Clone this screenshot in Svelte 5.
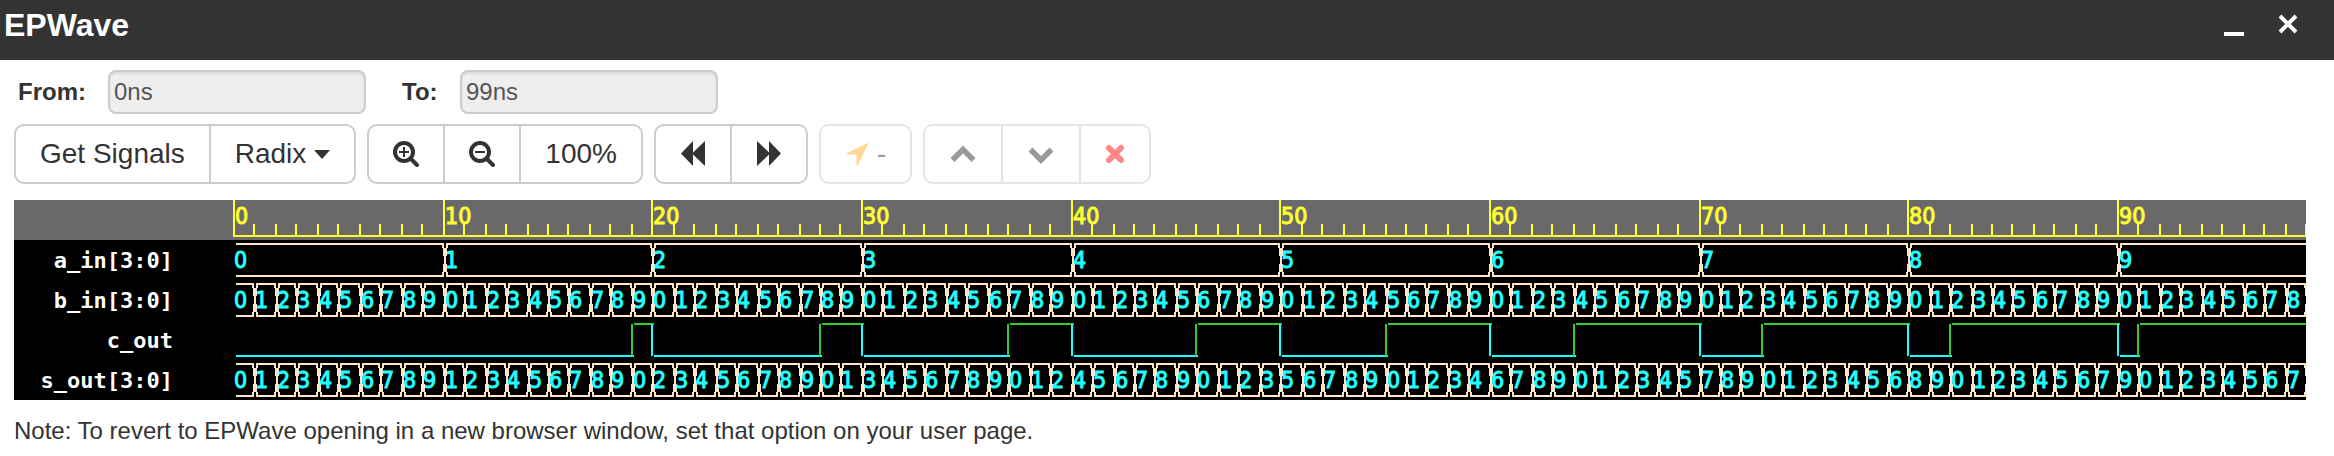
<script>
  const last = 99;
  const times = Array.from({ length: last + 1 }, (_, t) => t);

  let width = $state(2074);

  // Ticks are rounded to a two-pixel grid so that every line stays crisp.
  const xAt = (t) => 2 * Math.round(1 + (t * (width - 2)) / last / 2);

  const names = ['a_in[3:0]', 'b_in[3:0]', 'c_out', 's_out[3:0]'];
  const buses = [
    { top: 44, value: (t) => Math.floor(t / 10) },
    { top: 84, value: (t) => t % 10 },
    { top: 164, value: (t) => (Math.floor(t / 10) + (t % 10)) % 10 }
  ];
  const carry = (t) => Math.floor(t / 10) + (t % 10) >= 10;

  function spans(value) {
    const out = [];
    for (const t of times) {
      const v = value(t);
      const prev = out[out.length - 1];
      if (prev && prev.v === v) prev.end = t + 1;
      else out.push({ v, start: t, end: t + 1 });
    }
    return out;
  }

  function cell(s, top) {
    const mid = top + 16;
    const l = xAt(s.start) + 1;
    const r = xAt(s.end) + 1;
    return [top, top + 32]
      .map((y) => {
        const start = s.start === 0 ? `M${l + 1} ${y}` : `M${l} ${mid}L${l + 2} ${y}H${l + 4}`;
        return `${start}H${r - 2}L${r} ${mid}`;
      })
      .join('');
  }

  const carrySpans = spans(carry);
</script>

<div class="window">
  <header>
    <h1>EPWave</h1>
    <div class="controls">
      <button type="button" aria-label="Minimize">
        <svg width="24" height="24" viewBox="0 0 24 24"><path d="M2 22H22" stroke="#fff" stroke-width="4" /></svg>
      </button>
      <button type="button" aria-label="Close">
        <svg width="24" height="24" viewBox="0 0 24 24"><path d="M4 4L20 20M20 4L4 20" stroke="#fff" stroke-width="4" /></svg>
      </button>
    </div>
  </header>

  <main>
    <form class="range">
      <label for="from">From:</label>
      <input id="from" type="text" value="0ns" readonly />
      <label for="to">To:</label>
      <input id="to" type="text" value="99ns" readonly />
    </form>

    <div class="toolbar">
      <div class="group">
        <button type="button">Get Signals</button>
        <button type="button">Radix <span class="caret"></span></button>
      </div>
      <div class="group">
        <button type="button" aria-label="Zoom in">
          <svg width="26" height="26" viewBox="0 0 26 26">
            <circle cx="11" cy="11" r="9" fill="none" stroke="#333" stroke-width="4" />
            <path d="M17.5 17.5L24 24" stroke="#333" stroke-width="4" stroke-linecap="round" />
            <path d="M6 11H16M11 6V16" stroke="#333" stroke-width="2" />
          </svg>
        </button>
        <button type="button" aria-label="Zoom out">
          <svg width="26" height="26" viewBox="0 0 26 26">
            <circle cx="11" cy="11" r="9" fill="none" stroke="#333" stroke-width="4" />
            <path d="M17.5 17.5L24 24" stroke="#333" stroke-width="4" stroke-linecap="round" />
            <path d="M6 11H16" stroke="#333" stroke-width="2" />
          </svg>
        </button>
        <button type="button">100%</button>
      </div>
      <div class="group">
        <button type="button" aria-label="Previous edge">
          <svg width="26" height="26" viewBox="0 0 26 26"><path d="M1 12.500L13 0V11.500L25 0V25L13 13.500V25Z" fill="#333" /></svg>
        </button>
        <button type="button" aria-label="Next edge">
          <svg width="26" height="26" viewBox="0 0 26 26"><path d="M25 12.500L13 0V11.500L1 0V25L13 13.500V25Z" fill="#333" /></svg>
        </button>
      </div>
      <div class="group off">
        <button type="button" disabled>
          <svg width="24" height="24" viewBox="0 0 24 24"><path d="M22.500 1Q23.500 0.500 23 2L13 23Q11.500 24 11.500 22.500V12.500H1.500Q0.500 12 1.500 11.200Z" fill="#ffd899" /></svg>
          -
        </button>
      </div>
      <div class="group off">
        <button type="button" disabled aria-label="Move up">
          <svg width="28" height="26" viewBox="0 0 28 26"><path d="M3.500 19L14 8.500L24.500 19" fill="none" stroke="#999" stroke-width="5.500" /></svg>
        </button>
        <button type="button" disabled aria-label="Move down">
          <svg width="28" height="26" viewBox="0 0 28 26"><path d="M3.500 8.500L14 19L24.500 8.500" fill="none" stroke="#999" stroke-width="5.500" /></svg>
        </button>
        <button type="button" disabled aria-label="Remove">
          <svg width="20" height="26" viewBox="0 0 20 26"><path d="M4 7L16 19M16 7L4 19" stroke="#ff8589" stroke-width="6" stroke-linecap="round" /></svg>
        </button>
      </div>
    </div>

    <section class="viewer" aria-label="Waveforms">
      <ul class="names">
        {#each names as name}
          <li>{name}</li>
        {/each}
      </ul>
      <div class="traces" bind:clientWidth={width}>
        <svg width="100%" height="200">
          <g class="ruler">
            <path d="M1 36H{width}" />
            {#each times as t}
              <path d="M{xAt(t)} {t % 10 ? 24 : 0}V37" />
            {/each}
            {#each times.filter((t) => t % 10 === 0) as t}
              <text x={xAt(t) + 1} y="24">{t}</text>
            {/each}
          </g>
          {#each buses as bus}
            {#each spans(bus.value) as s}
              <path class="bus" d={cell(s, bus.top)} />
              {#if s.start < last}
                <text x={s.start ? xAt(s.start) + 1 : xAt(s.start)} y={bus.top + 24}>{s.v}</text>
              {/if}
            {/each}
          {/each}
          {#each carrySpans as s}
            {#if s.v}
              <path class="high" d="M{xAt(s.start)} 124V156M{xAt(s.start) + 2} 124H{xAt(s.end) + 2}" />
            {:else}
              {#if s.start}
                <path class="low" d="M{xAt(s.start)} 124V156" />
              {/if}
              <path class="low" d="M{xAt(s.start) + 2} 156H{xAt(s.end) + 2}" />
            {/if}
          {/each}
        </svg>
      </div>
    </section>

    <p class="note">Note: To revert to EPWave opening in a new browser window, set that option on your user page.</p>
  </main>
</div>

<style>
  :global(body) {
    margin: 0;
    background: #fff;
  }
  .window {
    color: #333;
    font-family: "Liberation Sans", Arial, sans-serif;
    font-size: 24px;
    line-height: 40px;
  }
  header {
    display: flex;
    justify-content: space-between;
    box-sizing: border-box;
    height: 60px;
    padding: 5px 34px 0 4px;
    background: #333;
    color: #fff;
  }
  h1 {
    margin: 0;
    font-size: 32px;
    line-height: 40px;
  }
  .controls {
    display: flex;
    gap: 30px;
    padding-top: 7px;
  }
  .controls button {
    width: 24px;
    height: 24px;
    padding: 0;
    border: 0;
    background: none;
  }
  svg {
    display: block;
    flex: none;
  }
  main {
    padding: 10px 28px 0 14px;
  }
  .range {
    display: flex;
    align-items: center;
    padding-left: 4px;
  }
  label {
    font-weight: bold;
    width: 90px;
  }
  label[for="to"] {
    width: 58px;
    margin-left: 36px;
  }
  input {
    box-sizing: border-box;
    width: 258px;
    height: 44px;
    padding: 0 4px;
    border: 2px solid #ccc;
    border-radius: 8px;
    background: #eee;
    box-shadow: inset 0 2px 2px rgba(0, 0, 0, 0.08);
    color: #555;
    font: inherit;
  }
  .toolbar {
    display: flex;
    flex-wrap: wrap;
    gap: 11px;
    margin-top: 10px;
  }
  .group {
    display: flex;
  }
  .group button {
    display: flex;
    align-items: center;
    gap: 8px;
    height: 60px;
    padding: 0 24px;
    border: 2px solid #ccc;
    background: #fff;
    color: #333;
    font: inherit;
    font-size: 28px;
  }
  .group button + button {
    margin-left: -2px;
  }
  .group button:first-child {
    border-radius: 10px 0 0 10px;
  }
  .group button:last-child {
    border-radius: 0 10px 10px 0;
  }
  .group button:only-child {
    border-radius: 10px;
  }
  .group.off button {
    border-color: #e5e5e5;
    color: #999;
  }
  .caret {
    border: 8px solid transparent;
    border-top: 9px solid #333;
    border-bottom: 0;
  }
  .viewer {
    display: flex;
    margin-top: 16px;
    background: linear-gradient(#696969 40px, #000 40px);
  }
  .names {
    box-sizing: border-box;
    flex: none;
    width: 218px;
    margin: 0;
    padding: 41px 59px 0 0;
    list-style: none;
    color: #fff;
    font: bold 22px/40px "DejaVu Sans Mono", monospace;
    text-align: right;
  }
  .names li {
    height: 40px;
  }
  .names li:last-child {
    height: 39px;
  }
  .traces {
    flex: 1;
    min-width: 0;
    overflow: hidden;
  }
  .traces path {
    fill: none;
    stroke-width: 2px;
    shape-rendering: crispEdges;
  }
  .traces text {
    font: 23px "DejaVu Sans Condensed", "DejaVu Sans", sans-serif;
    fill: #2ff;
    stroke: #2ff;
    stroke-width: 1px;
  }
  .traces .ruler path {
    stroke: #ff3;
  }
  .traces .ruler text {
    fill: #ff3;
    stroke: #ff3;
  }
  .bus {
    stroke: #ffe4c4;
  }
  .high {
    stroke: #3c3;
  }
  .low {
    stroke: #2ff;
  }
  .note {
    margin: 11px 0 0;
  }
</style>
